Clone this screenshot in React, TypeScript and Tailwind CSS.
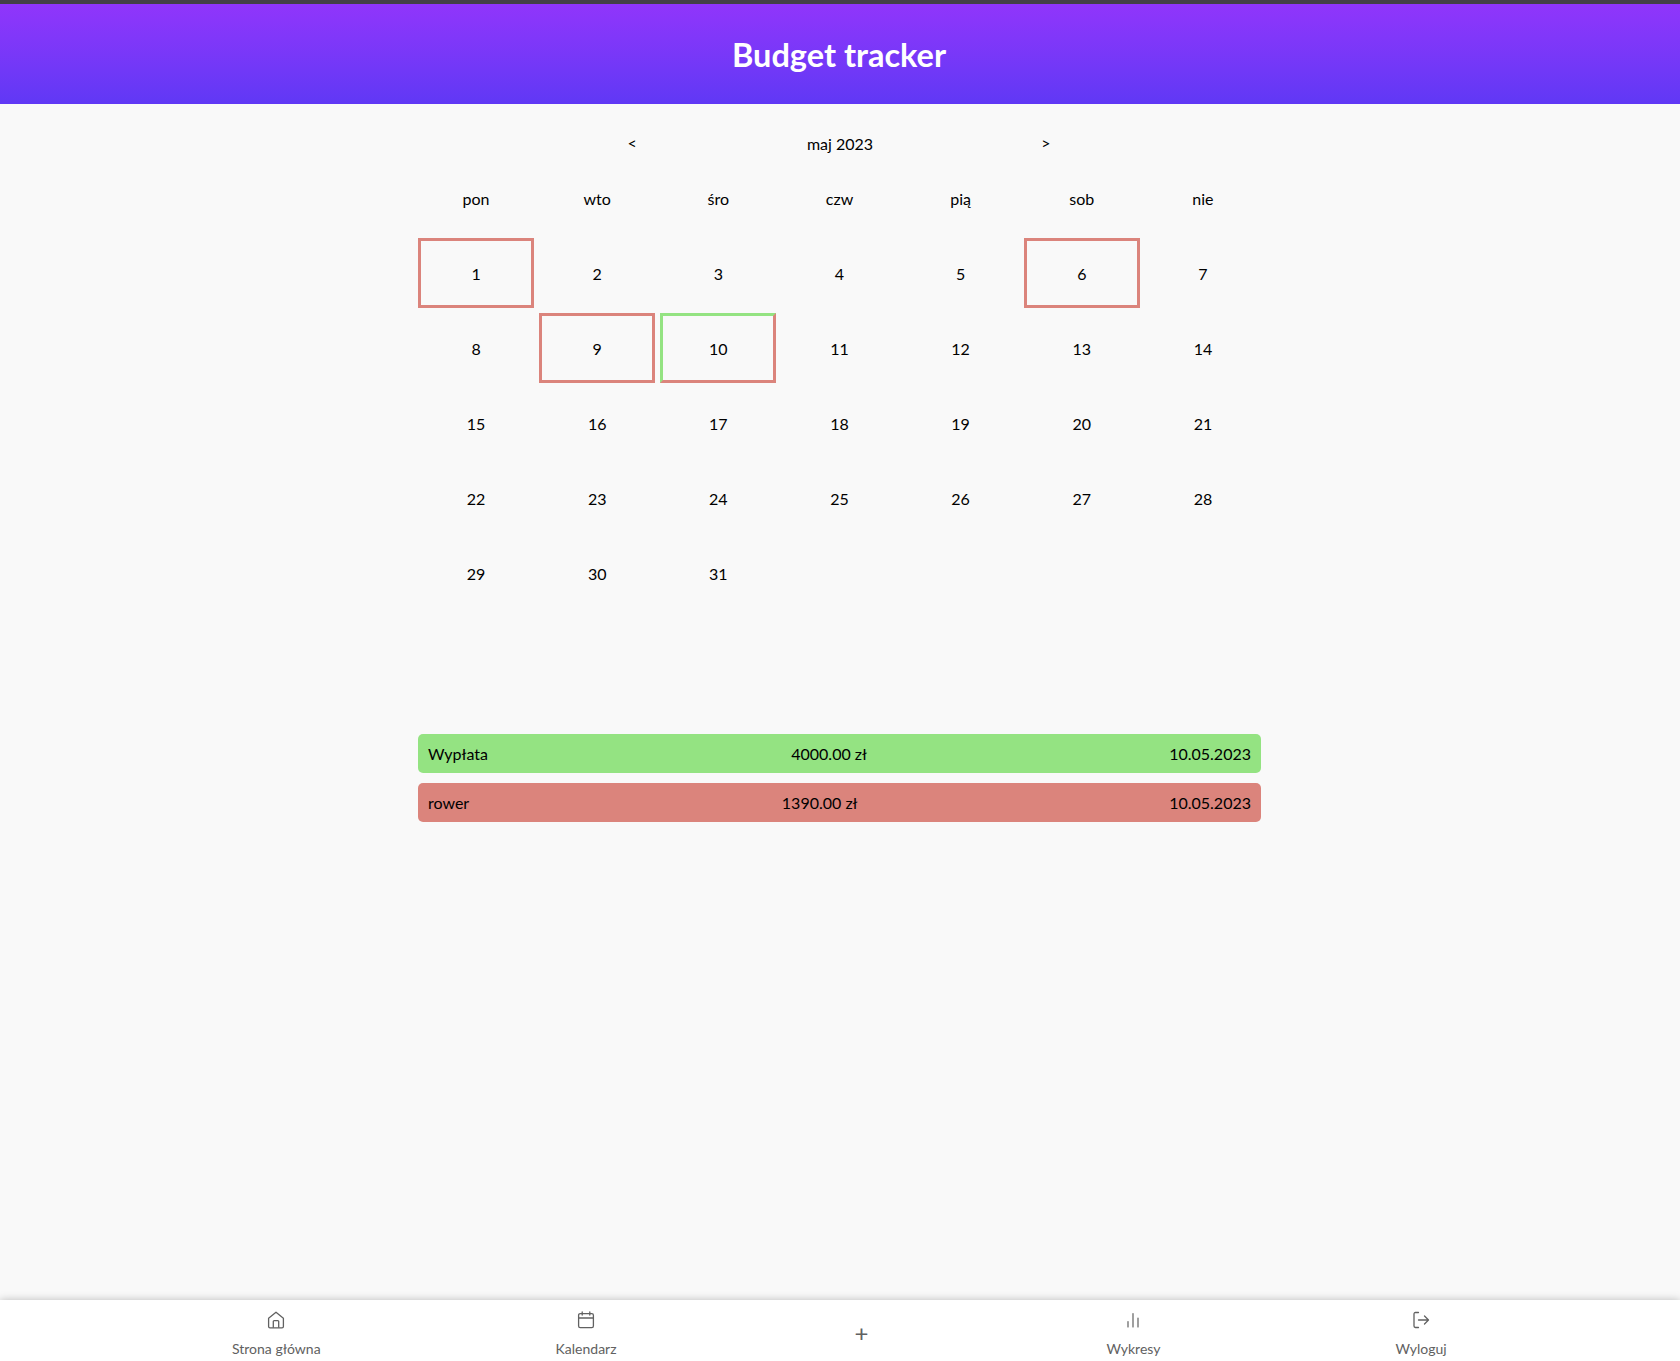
import React from "react";

const RED = "border-[#db847c]";

const weekDays = ["pon", "wto", "śro", "czw", "pią", "sob", "nie"];
const days = Array.from({ length: 31 }, (_, i) => i + 1);
const redDays = [1, 6, 9];

const HomeIcon = () => (
  <svg width="20" height="20" viewBox="0 0 20 20" fill="none" stroke="#616161" strokeWidth="1.3" strokeLinejoin="round">
    <path d="M2.6 8.2 10 2.2l7.4 6v8.2a1.4 1.4 0 0 1-1.4 1.4H4a1.4 1.4 0 0 1-1.4-1.4z" />
    <path d="M7.3 17.8v-6.3a.8.8 0 0 1 .8-.8h3.8a.8.8 0 0 1 .8.8v6.3" />
  </svg>
);

const CalendarIcon = () => (
  <svg width="20" height="20" viewBox="0 0 20 20" fill="none" stroke="#616161" strokeWidth="1.3" strokeLinecap="round">
    <rect x="2.6" y="3.6" width="14.8" height="14" rx="1.6" />
    <path d="M2.6 8h14.8M6.2 2v3M13.8 2v3" />
  </svg>
);

const ChartIcon = () => (
  <svg width="20" height="20" viewBox="0 0 20 20" fill="none" stroke="#616161" strokeWidth="1.2" strokeLinecap="round">
    <path d="M5 11.5V17M10 3.5V17M15 8v9" />
  </svg>
);

const LogoutIcon = () => (
  <svg width="20" height="20" viewBox="0 0 20 20" fill="none" stroke="#616161" strokeWidth="1.3" strokeLinecap="round" strokeLinejoin="round">
    <path d="M7.5 2.5H4.4A1.4 1.4 0 0 0 3 3.9v12.2a1.4 1.4 0 0 0 1.4 1.4h3.1" />
    <path d="M7.5 10h10M13.5 6l4 4-4 4" />
  </svg>
);

const NavItem = ({ icon, label, className }: { icon: React.ReactNode; label: string; className: string }) => (
  <div className={"flex flex-col items-center " + className}>
    <div className="h-5 mb-[9px]">{icon}</div>
    <span className="text-[14px] leading-[20px] text-[#616161]">{label}</span>
  </div>
);

export default function App() {
  return (
    <div className="min-h-[1361px] flex flex-col bg-[#f9f9f9] font-['Lato','Noto_Sans',sans-serif] text-black">
      <div className="h-1 bg-[#444046]" />
      <header className="h-[100px] pt-[2px] pr-[2px] flex items-center justify-center bg-gradient-to-b from-[#9035fb] to-[#6038f5]">
        <h1 className="text-[32.5px] font-bold text-white">Budget tracker</h1>
      </header>

      <main className="flex-1 w-[844px] mx-auto">
        <div className="flex items-center justify-center h-[36px] mt-[22px] text-[16px]">
          <button className="w-[110px] text-left text-[16px] pl-[1px] -mt-[3px]">&lt;</button>
          <span className="w-[207px] text-center">maj 2023</span>
          <button className="w-[110px] text-right text-[16px] pr-[3px] -mt-[3px]">&gt;</button>
        </div>

        <div className="grid grid-cols-7 w-[848px] mt-[17px] text-[16px]">
          {weekDays.map((d) => (
            <div key={d} className="h-[40px] pr-[5px] flex items-center justify-center">{d}</div>
          ))}
        </div>

        <div className="grid grid-cols-7 w-[848px] mt-[19px] text-[16px]">
          {days.map((d) => {
            const isRed = redDays.includes(d);
            const isToday = d === 10;
            return (
              <div key={d} className="h-[75px] pr-[5px]">
                <div
                  className={
                    "h-[70px] pt-[2px] flex items-center justify-center border-[3px] " +
                    (isToday
                      ? "border-t-[#94e382] border-l-[#94e382] border-r-[#db847c] border-b-[#db847c]"
                      : isRed
                      ? RED
                      : "border-transparent")
                  }
                >
                  {d}
                </div>
              </div>
            );
          })}
        </div>

        <div className="flex flex-col gap-[10px] mt-[121px] w-[843px] text-[16px]">
          <div className="flex items-center justify-between h-[39px] px-[10px] rounded-[5px] bg-[#94e382]">
            <span>Wypłata</span>
            <span className="ml-[1px]">4000.00 zł</span>
            <span>10.05.2023</span>
          </div>
          <div className="flex items-center justify-between h-[39px] px-[10px] rounded-[5px] bg-[#db847c]">
            <span>rower</span>
            <span className="ml-[1px]">1390.00 zł</span>
            <span>10.05.2023</span>
          </div>
        </div>
      </main>

      <nav className="h-[61px] pt-[7px] bg-white shadow-[0_0_8px_rgba(0,0,0,0.25)] flex items-center">
        <NavItem icon={<HomeIcon />} label="Strona główna" className="ml-[232px]" />
        <NavItem icon={<CalendarIcon />} label="Kalendarz" className="ml-[235px]" />
        <div className="ml-[238px] -mt-[3px] text-[24px] leading-none text-[#616161]">+</div>
        <NavItem icon={<ChartIcon />} label="Wykresy" className="ml-[238px]" />
        <NavItem icon={<LogoutIcon />} label="Wyloguj" className="ml-[235px]" />
      </nav>
    </div>
  );
}
